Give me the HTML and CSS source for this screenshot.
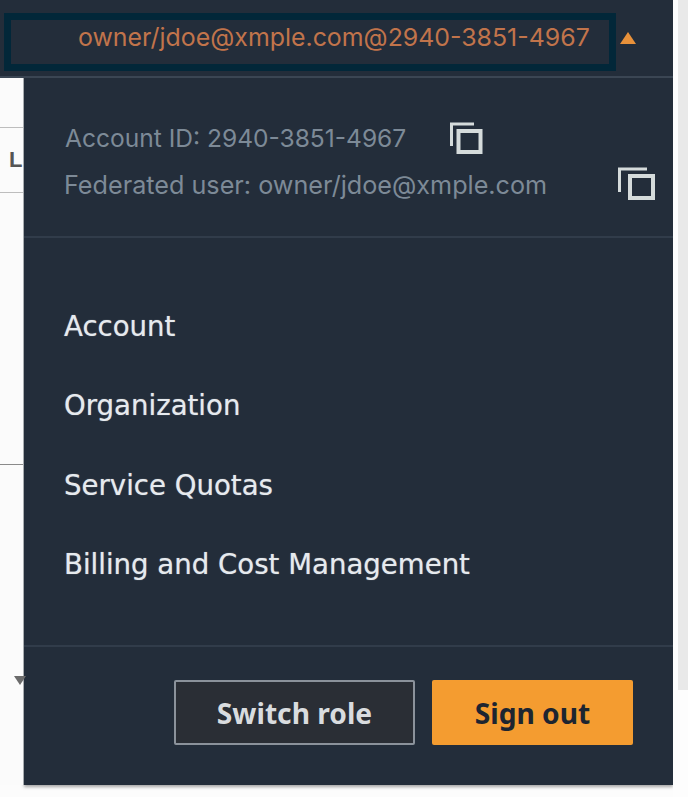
FILE: index.html
```html
<!DOCTYPE html>
<html lang="en">
<head>
<meta charset="utf-8">
<title>Account menu</title>
<link rel="stylesheet" href="styles.css">
</head>
<body>
<div class="page">
  <div class="main">
    <header class="topbar">
      <div class="field"><span class="field-text">owner/jdoe@xmple.com@2940-3851-4967</span></div>
      <svg class="caret" width="18" height="12" viewBox="0 0 18 12"><path d="M9 0 L17 12 H1 Z" fill="#e8913a"/></svg>
    </header>
    <div class="row">
      <aside class="sliver">
        <div class="cell cell-a"></div>
        <div class="cell cell-b"><span class="sliver-text">L</span></div>
        <div class="cell cell-c"></div>
        <div class="sort"></div>
      </aside>
      <section class="panel">
        <div class="info">
          <div class="info-row info-first">
            <span>Account ID: 2940-3851-4967</span>
            <svg class="copy copy-a" width="33" height="32" viewBox="0 0 33 32"><path d="M1.5 24 V2 H24" fill="none" stroke="#d5dbdb" stroke-width="3"/><rect x="8.5" y="9" width="22" height="21" fill="none" stroke="#d5dbdb" stroke-width="4"/></svg>
          </div>
          <div class="info-row info-second">
            <span>Federated user: owner/jdoe@xmple.com</span>
            <svg class="copy copy-b" width="37" height="33" viewBox="0 0 37 33"><path d="M1.5 25 V2 H29" fill="none" stroke="#d5dbdb" stroke-width="3"/><rect x="12" y="9" width="23" height="22" fill="none" stroke="#d5dbdb" stroke-width="4"/></svg>
          </div>
        </div>
        <nav class="menu">
          <a class="menu-item">Account</a>
          <a class="menu-item">Organization</a>
          <a class="menu-item">Service Quotas</a>
          <a class="menu-item">Billing and Cost Management</a>
        </nav>
        <footer class="actions">
          <button class="btn btn-switch">Switch role</button>
          <button class="btn btn-signout">Sign out</button>
        </footer>
      </section>
    </div>
  </div>
  <div class="gutter"><div class="scroll"></div></div>
</div>
</body>
</html>
```
FILE: styles.css
```css
* { box-sizing: border-box; }
html, body { margin: 0; padding: 0; background: #fcfcfc; }
body { width: 688px; height: 797px; overflow: hidden; }
.page { width: 688px; height: 797px; display: flex; }
.main { width: 673px; flex: none; display: flex; flex-direction: column; }

.topbar {
  height: 78px; background: #232d3a;
  border-bottom: 2px solid #3b4654;
  padding: 13px 0 0 4px;
  display: flex; align-items: flex-start;
}
.field {
  width: 612px; height: 58px;
  border: 7px solid #022739;
  padding-left: 68px;
  display: flex; align-items: center;
}
.field-text {
  font-family: Inter, sans-serif; font-size: 24.9px; color: #c1744b;
  white-space: nowrap; position: relative; top: -5px; left: -1px;
}
.caret { margin: 19px 0 0 3px; }

.row { display: flex; height: 707px; }
.sliver { width: 24px; flex: none; position: relative; background: #fbfbfb; border-right: 1px solid #a8acb0; }
.cell { border-bottom: 1px solid #bdbdbd; }
.cell-a { height: 50px; }
.cell-b { height: 65px; font-family: "Liberation Sans", sans-serif; font-size: 22px; font-weight: 700; color: #555; padding: 20px 0 0 9px; line-height: 24px; }
.cell-c { height: 272px; border-color: #8a8a8a; }
.sliver-text { white-space: nowrap; }
.sort {
  position: absolute; left: 14px; top: 598px;
  border-left: 6px solid transparent; border-right: 6px solid transparent; border-top: 9px solid #6b6b6b;
}

.panel {
  width: 649px; height: 707px; background: #232d3a; flex: none;
  display: flex; flex-direction: column;
  box-shadow: 0 2px 3px rgba(80, 80, 80, 0.5);
}
.info {
  height: 160px; border-bottom: 2px solid #313c4a;
  font-family: Inter, sans-serif; font-size: 24.55px; color: #7d8a97;
  padding-top: 44px;
}
.info-row { display: flex; align-items: center; white-space: nowrap; height: 32px; }
.info-first { padding-left: 41px; }
.info-second { padding-left: 40px; margin-top: 15px; font-size: 25.2px; }
.copy-a { margin-left: 44px; }
.copy-b { margin-left: 71px; margin-top: -3px; }

.menu {
  height: 409px; border-bottom: 2px solid #313c4a;
  padding-top: 49px;
  display: flex; flex-direction: column;
  font-family: "DejaVu Sans", sans-serif; font-size: 27.6px; color: #e6eaee;
  text-shadow: 0 0 1px rgba(230, 234, 238, 0.6);
}
.menu-item { height: 79.3px; line-height: 79.3px; padding-left: 40px; white-space: nowrap; }

.actions {
  flex: 1; display: flex; justify-content: flex-end; align-items: flex-start;
  gap: 17px; padding: 33px 40px 0 0;
}
.btn {
  height: 65px; font-family: "Noto Sans", sans-serif; font-size: 28.2px; font-weight: 700;
  border-radius: 2px; padding: 0;
}
.btn-switch { width: 241px; background: #2a2e35; color: #d9dcdf; border: 2px solid #8b929b; }
.btn-signout { width: 201px; background: #f49c30; color: #1d2530; border: none; }

.gutter { flex: 1; padding-left: 5px; background: #fdfdfd; }
.scroll { height: 690px; background: #e9e9e9; }
```
